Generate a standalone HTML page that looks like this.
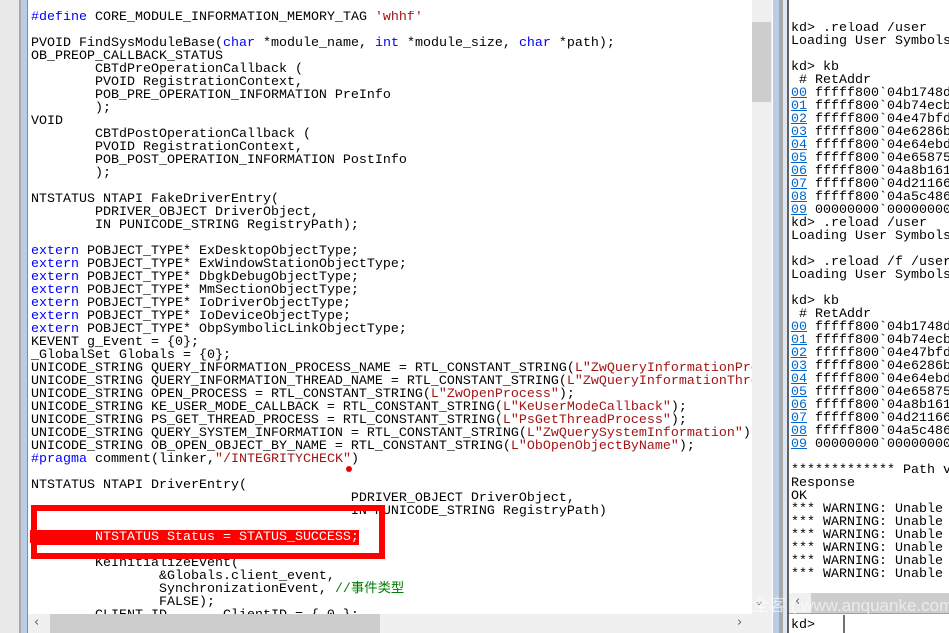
<!DOCTYPE html>
<html><head><meta charset="utf-8"><style>
*{margin:0;padding:0;box-sizing:border-box}
body{width:949px;height:633px;overflow:hidden;background:#fff;position:relative;font-family:"Liberation Mono","Noto Sans CJK SC",monospace;font-size:13.33px;}
.a{position:absolute}
pre{font-family:"Liberation Mono","Noto Sans CJK SC",monospace;font-size:13.33px;line-height:13px;color:#000;white-space:pre}
.k{color:#0000ff}.s{color:#a31515}.c{color:#008000}
.l{color:#0066cc;text-decoration:underline}
.hl{background:#f00;color:#fff}
</style></head><body>
<div class="a" style="left:0;top:0;width:19px;height:633px;background:#e9e9e9"></div>
<div class="a" style="left:19px;top:0;width:2px;height:633px;background:#a8a8a8"></div>
<div class="a" style="left:21px;top:0;width:6px;height:633px;background:#b9cde5"></div>
<div class="a" style="left:27px;top:0;width:1px;height:633px;background:#8a8a8a"></div>

<pre class="a" style="left:31px;top:11px;width:721px;height:603px;overflow:hidden"><span class="k">#define</span> CORE_MODULE_INFORMATION_MEMORY_TAG <span class="s">'whhf'</span>

PVOID FindSysModuleBase(<span class="k">char</span> *module_name, <span class="k">int</span> *module_size, <span class="k">char</span> *path);
OB_PREOP_CALLBACK_STATUS
        CBTdPreOperationCallback (
        PVOID RegistrationContext,
        POB_PRE_OPERATION_INFORMATION PreInfo
        );
VOID
        CBTdPostOperationCallback (
        PVOID RegistrationContext,
        POB_POST_OPERATION_INFORMATION PostInfo
        );

NTSTATUS NTAPI FakeDriverEntry(
        PDRIVER_OBJECT DriverObject,
        IN PUNICODE_STRING RegistryPath);

<span class="k">extern</span> POBJECT_TYPE* ExDesktopObjectType;
<span class="k">extern</span> POBJECT_TYPE* ExWindowStationObjectType;
<span class="k">extern</span> POBJECT_TYPE* DbgkDebugObjectType;
<span class="k">extern</span> POBJECT_TYPE* MmSectionObjectType;
<span class="k">extern</span> POBJECT_TYPE* IoDriverObjectType;
<span class="k">extern</span> POBJECT_TYPE* IoDeviceObjectType;
<span class="k">extern</span> POBJECT_TYPE* ObpSymbolicLinkObjectType;
KEVENT g_Event = {0};
_GlobalSet Globals = {0};
UNICODE_STRING QUERY_INFORMATION_PROCESS_NAME = RTL_CONSTANT_STRING(<span class="s">L"ZwQueryInformationProcess"</span>);
UNICODE_STRING QUERY_INFORMATION_THREAD_NAME = RTL_CONSTANT_STRING(<span class="s">L"ZwQueryInformationThread"</span>);
UNICODE_STRING OPEN_PROCESS = RTL_CONSTANT_STRING(<span class="s">L"ZwOpenProcess"</span>);
UNICODE_STRING KE_USER_MODE_CALLBACK = RTL_CONSTANT_STRING(<span class="s">L"KeUserModeCallback"</span>);
UNICODE_STRING PS_GET_THREAD_PROCESS = RTL_CONSTANT_STRING(<span class="s">L"PsGetThreadProcess"</span>);
UNICODE_STRING QUERY_SYSTEM_INFORMATION = RTL_CONSTANT_STRING(<span class="s">L"ZwQuerySystemInformation"</span>);
UNICODE_STRING OB_OPEN_OBJECT_BY_NAME = RTL_CONSTANT_STRING(<span class="s">L"ObOpenObjectByName"</span>);
<span class="k">#pragma</span> comment(linker,<span class="s">"/INTEGRITYCHECK"</span>)

NTSTATUS NTAPI DriverEntry(
                                        PDRIVER_OBJECT DriverObject,
                                        IN PUNICODE_STRING RegistryPath)

<span class="hl">        NTSTATUS Status = STATUS_SUCCESS;</span>

        KeInitializeEvent(
                &amp;Globals.client_event,
                SynchronizationEvent, <span class="c">//事件类型</span>
                FALSE);
        CLIENT_ID       ClientID = { 0 };</pre>
<div class="a" style="left:30px;top:530px;width:2px;height:13px;background:#f00"></div>
<div class="a" style="left:31px;top:505px;width:354px;height:54px;border:6px solid #f00"></div>
<div class="a" style="left:346px;top:466px;width:6px;height:6px;border-radius:3px;background:#e00"></div>

<div class="a" style="left:752px;top:0;width:20px;height:614px;background:#f0f0f0"></div>
<div class="a" style="left:752px;top:22px;width:19px;height:80px;background:#cdcdcd"></div>
<div class="a" style="left:754px;top:594px;font-size:12px;color:#606060;font-family:'DejaVu Sans',sans-serif">&#8964;</div>
<div class="a" style="left:28px;top:614px;width:724px;height:19px;background:#f0f0f0"></div>
<div class="a" style="left:50px;top:614px;width:330px;height:19px;background:#cdcdcd"></div>
<div class="a" style="left:34px;top:615px;font-size:13px;color:#606060;font-family:'DejaVu Sans',sans-serif">&#8249;</div>
<div class="a" style="left:737px;top:615px;font-size:13px;color:#606060;font-family:'DejaVu Sans',sans-serif">&#8250;</div>
<div class="a" style="left:752px;top:614px;width:20px;height:19px;background:#f0f0f0"></div>

<div class="a" style="left:772px;top:0;width:1px;height:633px;background:#fff"></div>
<div class="a" style="left:773px;top:0;width:6px;height:633px;background:#b9cde5"></div>
<div class="a" style="left:779px;top:0;width:4px;height:633px;background:#a8a8a8"></div>
<div class="a" style="left:783px;top:0;width:4px;height:633px;background:#dde6f1"></div>
<div class="a" style="left:787px;top:0;width:2px;height:633px;background:#606060"></div>

<pre class="a" style="left:791px;top:22px;width:158px;height:571px;overflow:hidden">kd&gt; .reload /user
Loading User Symbols

kd&gt; kb
 # RetAddr
<span class="l">00</span> fffff800`04b1748d
<span class="l">01</span> fffff800`04b74ecb
<span class="l">02</span> fffff800`04e47bfd
<span class="l">03</span> fffff800`04e6286b
<span class="l">04</span> fffff800`04e64ebd
<span class="l">05</span> fffff800`04e65875
<span class="l">06</span> fffff800`04a8b161
<span class="l">07</span> fffff800`04d21166
<span class="l">08</span> fffff800`04a5c486
<span class="l">09</span> 00000000`00000000
kd&gt; .reload /user
Loading User Symbols

kd&gt; .reload /f /user
Loading User Symbols

kd&gt; kb
 # RetAddr
<span class="l">00</span> fffff800`04b1748d
<span class="l">01</span> fffff800`04b74ecb
<span class="l">02</span> fffff800`04e47bfd
<span class="l">03</span> fffff800`04e6286b
<span class="l">04</span> fffff800`04e64ebd
<span class="l">05</span> fffff800`04e65875
<span class="l">06</span> fffff800`04a8b161
<span class="l">07</span> fffff800`04d21166
<span class="l">08</span> fffff800`04a5c486
<span class="l">09</span> 00000000`00000000

************* Path v
Response
OK
*** WARNING: Unable
*** WARNING: Unable
*** WARNING: Unable
*** WARNING: Unable
*** WARNING: Unable
*** WARNING: Unable</pre>
<div class="a" style="left:789px;top:593px;width:160px;height:20px;background:#f0f0f0"></div>
<div class="a" style="left:811px;top:593px;width:138px;height:20px;background:#cdcdcd"></div>
<div class="a" style="left:795px;top:594px;font-size:13px;color:#606060;font-family:'DejaVu Sans',sans-serif">&#8249;</div>
<div class="a" style="left:789px;top:613px;width:160px;height:1px;background:#a0a0a0"></div>
<pre class="a" style="left:791px;top:619px">kd&gt;</pre>
<div class="a" style="left:843px;top:615px;width:2px;height:18px;background:#707070"></div>
<div class="a" style="left:735px;top:591px;color:rgba(255,255,255,0.6);font-family:'Liberation Sans','Noto Sans CJK SC',sans-serif;font-size:17px;white-space:nowrap">安全客 ( www.anquanke.com )</div>
</body></html>
